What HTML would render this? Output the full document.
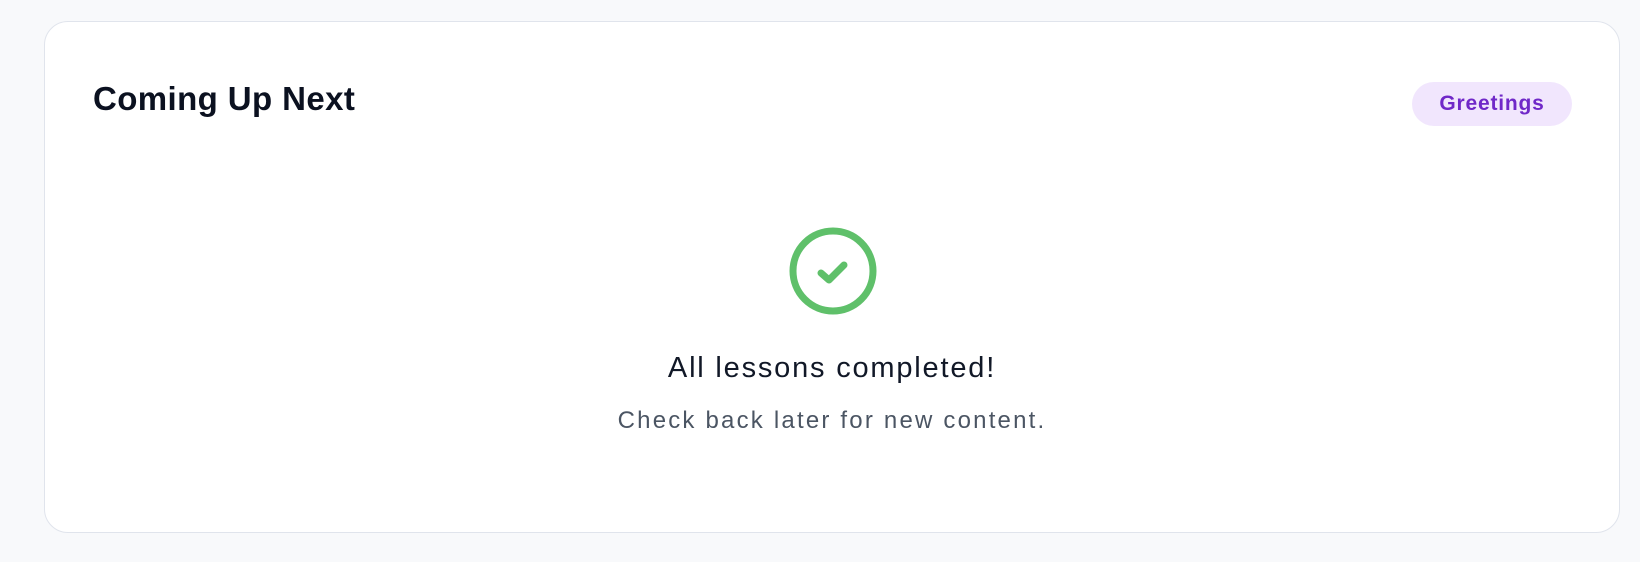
<!DOCTYPE html>
<html><head><style>
html,body{margin:0;padding:0;}
body{width:1640px;height:562px;background:#f8f9fb;font-family:"Liberation Sans",sans-serif;position:relative;overflow:hidden;}
.card{position:absolute;left:44px;top:21px;width:1576px;height:512px;background:#fff;border:1.5px solid #e0e4ec;border-radius:24px;box-sizing:border-box;}
.title{position:absolute;left:48px;top:58px;font-size:33px;font-weight:bold;color:#0b1120;letter-spacing:0.4px;}
.badge{position:absolute;left:1367px;top:60px;width:160px;height:44px;border-radius:22px;background:#f1e6fd;color:#7028c8;font-size:21px;font-weight:bold;text-align:center;line-height:44px;letter-spacing:0.8px;}
.icon{position:absolute;left:743px;top:204px;}
.h{position:absolute;left:0;right:0;top:330px;text-align:center;font-size:29px;color:#111827;letter-spacing:1.8px;}
.s{position:absolute;left:0;right:0;top:385px;text-align:center;font-size:24px;color:#4b5563;letter-spacing:2.2px;}
</style></head><body>
<div class="card">
<div class="title">Coming Up Next</div>
<div class="badge">Greetings</div>
<svg class="icon" width="90" height="90" viewBox="0 0 90 90"><circle cx="45" cy="45" r="40" fill="none" stroke="#5fc06a" stroke-width="7"/><path d="M33 47 L41 54 L56 39" fill="none" stroke="#5fc06a" stroke-width="7" stroke-linecap="round" stroke-linejoin="round"/></svg>
<div class="h">All lessons completed!</div>
<div class="s">Check back later for new content.</div>
</div>
</body></html>
